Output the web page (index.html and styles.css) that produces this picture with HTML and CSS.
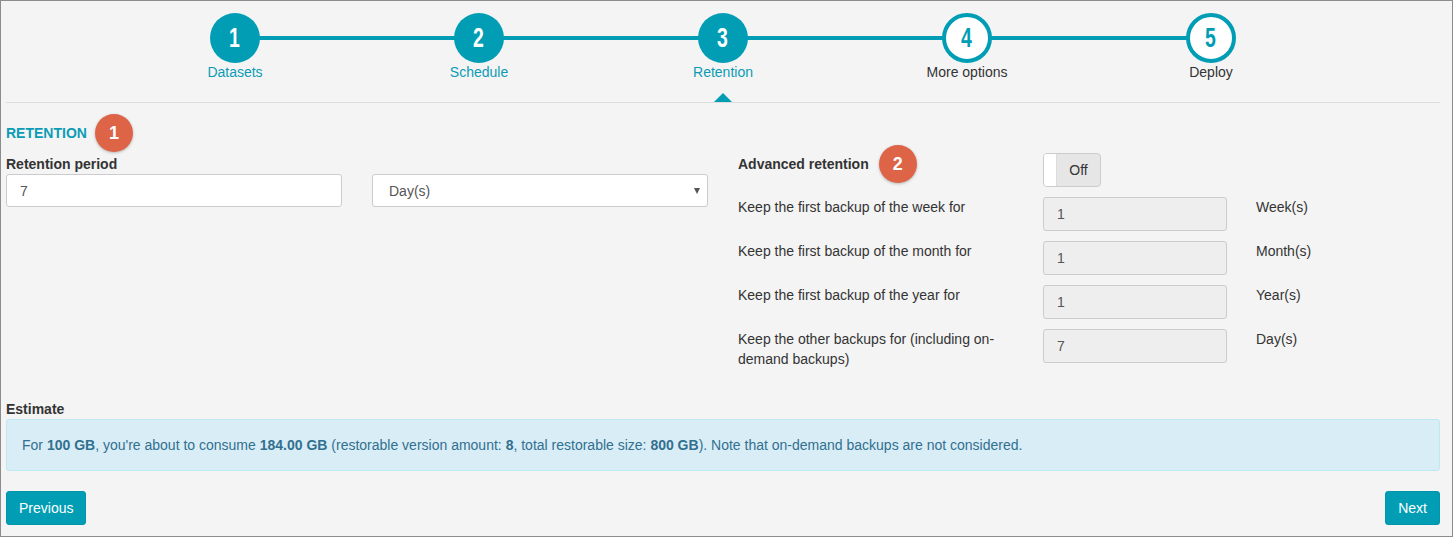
FILE: index.html
```html
<!DOCTYPE html>
<html lang="en">
<head>
<meta charset="utf-8">
<title>Retention</title>
<link rel="stylesheet" href="styles.css">
</head>
<body>
<div class="page">
  <div class="stepper">
    <div class="steps">
      <div class="step done"><div class="circle"><span>1</span></div><div class="step-label">Datasets</div></div>
      <div class="step done"><div class="circle"><span>2</span></div><div class="step-label">Schedule</div></div>
      <div class="step done current"><div class="circle"><span>3</span></div><div class="step-label">Retention</div><div class="caret"></div></div>
      <div class="step todo"><div class="circle"><span>4</span></div><div class="step-label">More options</div></div>
      <div class="step todo"><div class="circle"><span>5</span></div><div class="step-label">Deploy</div></div>
    </div>
  </div>

  <div class="section-head">
    <h2 class="section-title">RETENTION</h2>
    <span class="badge">1</span>
  </div>

  <div class="cols">
    <div class="left">
      <label class="field-label">Retention period</label>
      <div class="period-row">
        <input class="input" type="text" value="7">
        <div class="select-wrap">
          <select class="input select"><option>Day(s)</option></select>
        </div>
      </div>
    </div>
    <div class="right">
      <div class="adv-grid">
        <div class="cell-label adv-label"><span class="bold">Advanced retention</span><span class="badge badge-inline">2</span></div>
        <div class="cell-input"><div class="toggle"><span class="knob"></span><span class="toggle-text">Off</span></div></div>
        <div class="cell-unit"></div>

        <div class="cell-label">Keep the first backup of the week for</div>
        <div class="cell-input"><input class="input disabled" type="text" value="1" disabled></div>
        <div class="cell-unit">Week(s)</div>

        <div class="cell-label">Keep the first backup of the month for</div>
        <div class="cell-input"><input class="input disabled" type="text" value="1" disabled></div>
        <div class="cell-unit">Month(s)</div>

        <div class="cell-label">Keep the first backup of the year for</div>
        <div class="cell-input"><input class="input disabled" type="text" value="1" disabled></div>
        <div class="cell-unit">Year(s)</div>

        <div class="cell-label">Keep the other backups for (including on-demand backups)</div>
        <div class="cell-input"><input class="input disabled" type="text" value="7" disabled></div>
        <div class="cell-unit">Day(s)</div>
      </div>
    </div>
  </div>

  <div class="estimate-label">Estimate</div>
  <div class="alert">For <b>100 GB</b>, you're about to consume <b>184.00 GB</b> (restorable version amount: <b>8</b>, total restorable size: <b>800 GB</b>). Note that on-demand backups are not considered.</div>

  <div class="actions">
    <button class="btn">Previous</button>
    <button class="btn">Next</button>
  </div>
</div>
</body>
</html>
```

FILE: styles.css
```css
* { box-sizing: border-box; }
html, body { margin: 0; padding: 0; }
body {
  font-family: "Liberation Sans", Arial, sans-serif;
  font-size: 14px;
  line-height: 20px;
  color: #333;
  background: #f4f4f4;
}
.page {
  width: 1453px;
  height: 537px;
  border: 1px solid #8c8c8c;
  background: #f4f4f4;
  padding: 0 12px 0 5px;
  overflow: hidden;
}

/* stepper */
.stepper {
  padding-top: 12px;
  border-bottom: 1px solid #dddddd;
}
.steps {
  width: 1220px;
  margin: 0 auto;
  display: flex;
}
.step {
  position: relative;
  flex: 1 1 0;
  display: flex;
  flex-direction: column;
  align-items: center;
  padding-bottom: 21px;
}
.step::before, .step::after {
  content: "";
  position: absolute;
  top: 23px;
  height: 4px;
  background: #019db5;
  width: 50%;
}
.step::before { left: 0; }
.step::after { right: 0; }
.step:first-child::before, .step:last-child::after { display: none; }
.circle {
  position: relative;
  z-index: 1;
  width: 50px;
  height: 50px;
  border-radius: 50%;
  background: #019db5;
  display: flex;
  align-items: center;
  justify-content: center;
}
.circle span {
  font-family: "Liberation Sans", Arial, sans-serif;
  font-weight: bold;
  font-size: 27px;
  line-height: 1;
  color: #fff;
  transform: scaleX(0.72);
  display: inline-block;
}
.todo .circle {
  background: #fff;
  border: 4px solid #019db5;
}
.todo .circle span { color: #019db5; }
.step-label {
  margin-top: 1px;
  line-height: 17px;
  font-size: 14px;
  color: #0b9cb5;
}
.todo .step-label { color: #333; }
.caret {
  position: absolute;
  bottom: 0;
  left: 50%;
  margin-left: -9px;
  width: 0;
  height: 0;
  border-left: 9px solid transparent;
  border-right: 9px solid transparent;
  border-bottom: 9px solid #019db5;
}

/* section head */
.section-head {
  display: flex;
  align-items: center;
  gap: 8px;
  margin-top: 11px;
  height: 38px;
}
.section-title {
  margin: 0;
  font-size: 14px;
  font-weight: bold;
  color: #0b9cb5;
}
.badge {
  width: 38px;
  height: 38px;
  border-radius: 50%;
  background: #dd6446;
  color: #fff;
  font-weight: bold;
  font-size: 18px;
  display: inline-flex;
  align-items: center;
  justify-content: center;
  box-shadow: 0 1px 3px rgba(0,0,0,0.25);
}
.badge-inline {
  margin: -9px 0 -9px 10px;
}

/* columns */
.cols {
  display: grid;
  grid-template-columns: 717px 1fr;
}
.left { padding-top: 2px; }
.field-label {
  display: block;
  font-weight: bold;
  line-height: 20px;
  margin-bottom: 0;
}
.period-row {
  display: grid;
  grid-template-columns: 336px 336px;
  column-gap: 30px;
}
.input {
  display: block;
  width: 100%;
  height: 33px;
  border: 1px solid #cccccc;
  border-radius: 3px;
  background: #fff;
  font-family: "Liberation Sans", Arial, sans-serif;
  font-size: 14px;
  color: #555;
  padding: 0 13px;
  margin: 0;
  outline: none;
}
.select-wrap { position: relative; }
.select-wrap::after {
  content: "";
  position: absolute;
  right: 8px;
  top: 14px;
  border-left: 3.5px solid transparent;
  border-right: 3.5px solid transparent;
  border-top: 6px solid #555;
  pointer-events: none;
}
.select {
  -webkit-appearance: none;
  appearance: none;
  padding-left: 16px;
}
.input.disabled {
  background: #eeeeee;
  height: 34px;
  padding-left: 13px;
  color: #555;
  -webkit-text-fill-color: #555;
  opacity: 1;
}

.right {
  padding-left: 15px;
  padding-top: 1px;
}
.adv-grid {
  display: grid;
  grid-template-columns: 305px 213px 1fr;
  row-gap: 10px;
}
.cell-label {
  padding-right: 15px;
  line-height: 20px;
}
.adv-label {
  display: flex;
  align-items: flex-start;
  padding-top: 1px;
}
.bold { font-weight: bold; }
.cell-input { width: 184px; }
.cell-unit { line-height: 20px; }
.toggle {
  width: 58px;
  height: 34px;
  border: 1px solid #cccccc;
  border-radius: 4px;
  background: #e6e6e6;
  display: flex;
  overflow: hidden;
}
.knob {
  width: 13px;
  background: #fff;
  border-right: 1px solid #dcdcdc;
}
.toggle-text {
  flex: 1;
  display: flex;
  align-items: center;
  justify-content: center;
  color: #333;
}

/* estimate */
.estimate-label {
  margin-top: 30px;
  font-weight: bold;
  line-height: 20px;
}
.alert {
  border: 1px solid #bce8f1;
  background: #d9edf7;
  color: #31708f;
  border-radius: 3px;
  padding: 15px;
  line-height: 20px;
}

.actions {
  margin-top: 20px;
  display: flex;
  justify-content: space-between;
}
.btn {
  height: 34px;
  padding: 0 12px;
  border: 1px solid #0195ac;
  border-radius: 3px;
  background: #019db5;
  color: #fff;
  font-family: "Liberation Sans", Arial, sans-serif;
  font-size: 14px;
}
```
